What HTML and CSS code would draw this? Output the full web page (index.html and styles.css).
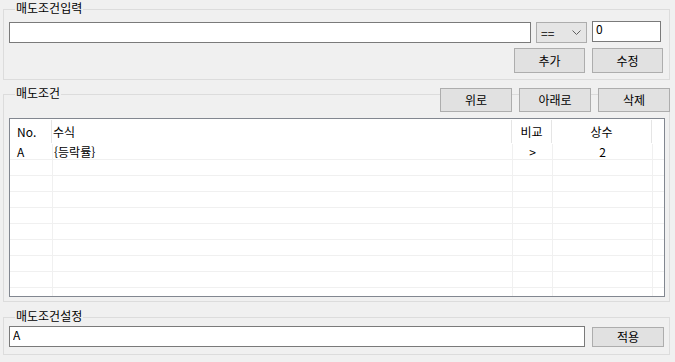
FILE: index.html
```html
<!DOCTYPE html>
<html lang="ko">
<head>
    <meta charset="UTF-8">
    <title>매도조건</title>
    <link rel="stylesheet" href="styles.css">
</head>
<body>

<fieldset class="group group-input">
    <legend>매도조건입력</legend>
    <div class="row row-expr">
        <input type="text" class="textbox expr" value="">
        <div class="combo">
            <span>==</span>
            <svg width="9" height="5" viewBox="0 0 9 5"><polyline points="0.5,0.5 4.5,4.5 8.5,0.5" fill="none" stroke="#606060" stroke-width="1"/></svg>
        </div>
        <input type="text" class="textbox const" value="0">
    </div>
    <div class="row row-buttons">
        <button class="btn">추가</button>
        <button class="btn">수정</button>
    </div>
</fieldset>

<fieldset class="group group-list">
    <legend>매도조건</legend>
    <div class="row row-tools">
        <button class="btn tool">위로</button>
        <button class="btn tool">아래로</button>
        <button class="btn tool">삭제</button>
    </div>
    <div class="listview">
        <div class="lv-head">
            <div class="cell c-no">No.</div>
            <div class="cell c-expr">수식</div>
            <div class="cell c-cmp center">비교</div>
            <div class="cell c-val center">상수</div>
            <div class="cell c-rest"></div>
        </div>
        <div class="lv-row">
            <div class="cell c-no">A</div>
            <div class="cell c-expr">{등락률}</div>
            <div class="cell c-cmp center">&gt;</div>
            <div class="cell c-val center">2</div>
            <div class="cell c-rest"></div>
        </div>
        <div class="lv-row"><div class="cell c-no"></div><div class="cell c-expr"></div><div class="cell c-cmp"></div><div class="cell c-val"></div><div class="cell c-rest"></div></div>
        <div class="lv-row"><div class="cell c-no"></div><div class="cell c-expr"></div><div class="cell c-cmp"></div><div class="cell c-val"></div><div class="cell c-rest"></div></div>
        <div class="lv-row"><div class="cell c-no"></div><div class="cell c-expr"></div><div class="cell c-cmp"></div><div class="cell c-val"></div><div class="cell c-rest"></div></div>
        <div class="lv-row"><div class="cell c-no"></div><div class="cell c-expr"></div><div class="cell c-cmp"></div><div class="cell c-val"></div><div class="cell c-rest"></div></div>
        <div class="lv-row"><div class="cell c-no"></div><div class="cell c-expr"></div><div class="cell c-cmp"></div><div class="cell c-val"></div><div class="cell c-rest"></div></div>
        <div class="lv-row"><div class="cell c-no"></div><div class="cell c-expr"></div><div class="cell c-cmp"></div><div class="cell c-val"></div><div class="cell c-rest"></div></div>
        <div class="lv-row"><div class="cell c-no"></div><div class="cell c-expr"></div><div class="cell c-cmp"></div><div class="cell c-val"></div><div class="cell c-rest"></div></div>
        <div class="lv-row"><div class="cell c-no"></div><div class="cell c-expr"></div><div class="cell c-cmp"></div><div class="cell c-val"></div><div class="cell c-rest"></div></div>
        <div class="lv-row"><div class="cell c-no"></div><div class="cell c-expr"></div><div class="cell c-cmp"></div><div class="cell c-val"></div><div class="cell c-rest"></div></div>
    </div>
</fieldset>

<fieldset class="group group-setting">
    <legend>매도조건설정</legend>
    <div class="row row-setting">
        <input type="text" class="textbox setting" value="A">
        <button class="btn apply">적용</button>
    </div>
</fieldset>

</body>
</html>
```

FILE: styles.css
```css
body {
    margin: 0;
    padding: 0 5px 0 3px;
    width: 675px;
    height: 362px;
    box-sizing: border-box;
    overflow: hidden;
    background: #f0f0f0;
    font-family: "Noto Sans CJK KR", "Liberation Sans", sans-serif;
    font-size: 12px;
    color: #000;
}

/* group boxes */
.group {
    margin: 0;
    padding: 0 6px 6px 5px;
    border: 1px solid #dcdcdc;
    min-width: 0;
}
.group legend {
    margin-left: 6px;
    padding: 0 1px 2px;
    line-height: 16px;
}
.group-list {
    margin-top: 5px;
    padding: 0 4px 4px 5px;
}
.group-setting {
    margin-top: 6px;
    padding: 0 5px 7px 5px;
}

.row {
    display: flex;
}
.row-expr {
    margin-top: 3px;
    margin-right: 2px;
    align-items: flex-start;
    gap: 5px;
}
.row-buttons {
    margin-top: 5px;
    justify-content: flex-end;
    gap: 7px;
}
.row-tools {
    margin-top: -15px;
    margin-right: -5px;
    justify-content: flex-end;
    gap: 7px;
}
.row-setting {
    align-items: flex-start;
    gap: 7px;
}

/* text boxes */
.textbox {
    box-sizing: border-box;
    height: 21px;
    margin: 0;
    padding: 0 2px 6px 3px;
    border: 1px solid #7a7a7a;
    background: #fff;
    font-family: inherit;
    font-size: 12px;
    color: #000;
    outline: none;
}
.expr {
    flex: 1;
    margin-top: 1px;
}
.const {
    width: 69px;
}
.setting {
    flex: 1;
    padding-bottom: 5px;
}

.combo {
    box-sizing: border-box;
    width: 51px;
    height: 21px;
    margin-top: 1px;
    display: flex;
    align-items: center;
    justify-content: space-between;
    padding: 0 5px 0 4px;
    border: 1px solid #adadad;
    background: #e5e5e5;
    line-height: 14px;
}

/* buttons */
.btn {
    box-sizing: border-box;
    width: 71px;
    height: 25px;
    margin: 0;
    padding: 0;
    border: 1px solid #adadad;
    background: #e1e1e1;
    font-family: inherit;
    font-size: 12px;
    line-height: 14px;
    color: #000;
}
.tool {
    width: 72px;
    height: 24px;
}
.apply {
    width: 72px;
    height: 20px;
    margin-top: 1px;
}

/* list view */
.listview {
    margin-top: 6px;
    height: 179px;
    box-sizing: border-box;
    border: 1px solid #828790;
    background: #fff;
    overflow: hidden;
}
.lv-head {
    display: flex;
    height: 25px;
}
.lv-head .cell {
    height: 23px;
    margin-top: 1px;
    line-height: 23px;
    border-right: 1px solid #e5e5e5;
}
.lv-row {
    display: flex;
    height: 16px;
    box-sizing: border-box;
    border-bottom: 1px solid #f0f0f0;
}
.lv-row .cell {
    line-height: 15px;
    border-right: 1px solid #f0f0f0;
}
.cell {
    box-sizing: border-box;
    flex: none;
    padding-left: 1px;
    white-space: nowrap;
}
.cell.center {
    padding-left: 0;
    text-align: center;
}
.c-no {
    width: 43px;
    padding-left: 7px;
}
.lv-head .c-no {
    width: 42px;
}
.c-expr {
    width: 460px;
}
.c-cmp {
    width: 40px;
}
.c-val {
    width: 100px;
}
.c-rest {
    flex: 1;
}
.lv-head .c-rest,
.lv-row .c-rest {
    border-right: none;
}
```
